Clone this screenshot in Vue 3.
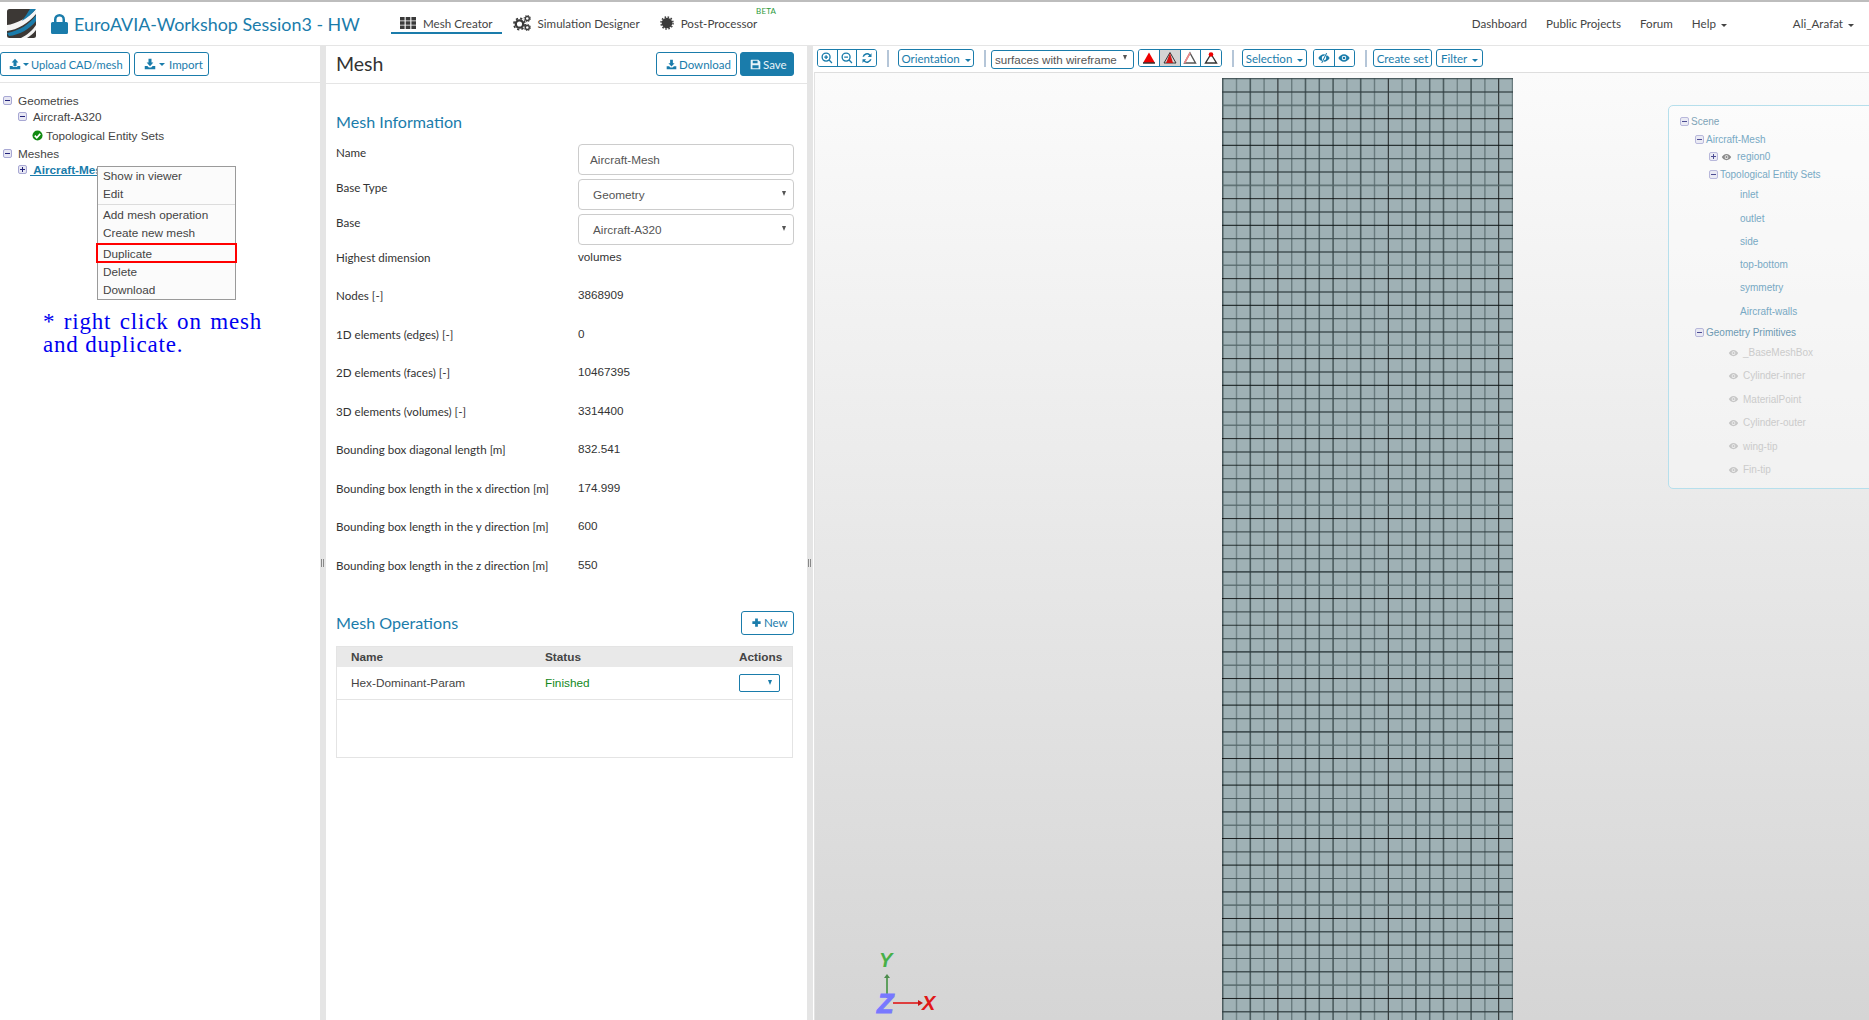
<script setup>
const nodeRows = [
  ['Highest dimension', 'volumes'],
  ['Nodes [-]', '3868909'],
  ['1D elements (edges) [-]', '0'],
  ['2D elements (faces) [-]', '10467395'],
  ['3D elements (volumes) [-]', '3314400'],
  ['Bounding box diagonal length [m]', '832.541'],
  ['Bounding box length in the x direction [m]', '174.999'],
  ['Bounding box length in the y direction [m]', '600'],
  ['Bounding box length in the z direction [m]', '550'],
]
const vStyle = [
  ['#39494c', 1.6], ['#647679', 1.4], ['#39494c', 1.6], ['#5d6f72', 1.4],
  ['#000000', 1], ['#5d6f72', 1.4], ['#39494c', 1.6], ['#44565a', 1.5],
]
const hStyle = [
  ['#39494c', 1.2], ['#2f3d40', 1.6], ['#546669', 1.6], ['#000000', 1], ['#2f3d40', 1.4], ['#101818', 1.2],
]
const vLines = Array.from({ length: 22 }, (_, i) => ({ p: 0.7 + i * 13.8, c: vStyle[i % 8][0], w: vStyle[i % 8][1] }))
const hLines = Array.from({ length: 72 }, (_, i) => ({ p: 0.7 + i * 13.33, c: hStyle[i % 6][0], w: hStyle[i % 6][1] }))
const geo = ['_BaseMeshBox', 'Cylinder-inner', 'MaterialPoint', 'Cylinder-outer', 'wing-tip', 'Fin-tip']
const sets = ['inlet', 'outlet', 'side', 'top-bottom', 'symmetry', 'Aircraft-walls']
</script>

<template>
  <div class="app">
    <svg class="defs" width="0" height="0" aria-hidden="true">
      <symbol id="i-up" viewBox="0 0 16 16"><path d="M8 1 12.500 6H10v5H6V6H3.500z" /><path d="M1 10.500h4v1.500h6v-1.500h4V15H1z" /></symbol>
      <symbol id="i-down" viewBox="0 0 16 16"><path d="M6 1h4v5h2.500L8 11 3.500 6H6z" /><path d="M1 10.500h3.500L6.500 12.500h3l2-2H15V15H1z" /></symbol>
      <symbol id="i-save" viewBox="0 0 16 16"><path fill-rule="evenodd" d="M2 1h10l3 3v11H1V2a1 1 0 0 1 1-1zm2 1.500V6h7V2.500zM3.500 9v4.500h9V9z" /></symbol>
      <symbol id="i-plus" viewBox="0 0 16 16"><path d="M6 2h4v4h4v4h-4v4H6v-4H2V6h4z" /></symbol>
      <symbol id="i-zin" viewBox="0 0 16 16"><path fill="none" stroke="currentColor" stroke-width="1.800" d="M6.800 1.500a5.300 5.300 0 1 1 0 10.600 5.300 5.300 0 0 1 0-10.600zM10.800 10.800l3.800 3.800M4.300 6.800h5M6.800 4.300v5" /></symbol>
      <symbol id="i-zout" viewBox="0 0 16 16"><path fill="none" stroke="currentColor" stroke-width="1.800" d="M6.800 1.500a5.300 5.300 0 1 1 0 10.600 5.300 5.300 0 0 1 0-10.600zM10.800 10.800l3.800 3.800M4.300 6.800h5" /></symbol>
      <symbol id="i-ref" viewBox="0 0 16 16"><path d="M14 1.500v5h-5l1.900-1.900A4.200 4.200 0 0 0 4 6.300H2A6.200 6.200 0 0 1 12.300 3.200zM2 14.500v-5h5l-1.900 1.900A4.200 4.200 0 0 0 12 9.700h2A6.200 6.200 0 0 1 3.700 12.800z" /></symbol>
      <symbol id="i-eye" viewBox="0 0 16 16"><path fill-rule="evenodd" d="M8 3c3.400 0 6 2.500 7.500 5-1.500 2.500-4.100 5-7.500 5S2 10.500.5 8C2 5.500 4.600 3 8 3zm0 2a3 3 0 1 0 0 6 3 3 0 0 0 0-6z" /><circle cx="8" cy="8" r="1.800" /></symbol>
      <symbol id="i-eyex" viewBox="0 0 16 16"><path fill-rule="evenodd" d="M8 3c3.400 0 6 2.500 7.500 5-1.500 2.500-4.100 5-7.500 5S2 10.500.5 8C2 5.500 4.600 3 8 3zm0 2a3 3 0 1 0 0 6 3 3 0 0 0 0-6z" /><path d="M11.500 1.500 5 14.500" stroke="#fff" stroke-width="2.800" /><path d="M11.500 1.500 5 14.500" stroke="currentColor" stroke-width="1.400" /></symbol>
      <symbol id="i-th" viewBox="0 0 16 14"><path d="M0 1h4.600v3.400H0zM5.700 1h4.600v3.400H5.700zM11.400 1H16v3.400h-4.600zM0 5.300h4.600v3.400H0zM5.700 5.300h4.600v3.400H5.700zM11.400 5.300H16v3.400h-4.600zM0 9.600h4.600V13H0zM5.700 9.600h4.600V13H5.700zM11.400 9.600H16V13h-4.600z" /></symbol>
      <symbol id="i-cogs" viewBox="0 0 18 16">
        <circle cx="6.500" cy="9" r="3.700" fill="none" stroke="currentColor" stroke-width="2.300" />
        <circle cx="6.500" cy="9" r="5.600" fill="none" stroke="currentColor" stroke-width="1.700" stroke-dasharray="2.200 2.200" />
        <circle cx="14.300" cy="3.500" r="2" fill="none" stroke="currentColor" stroke-width="1.400" />
        <circle cx="14.300" cy="3.500" r="3.200" fill="none" stroke="currentColor" stroke-width="1" stroke-dasharray="1.300 1.200" />
        <circle cx="14.300" cy="12.500" r="2" fill="none" stroke="currentColor" stroke-width="1.400" />
        <circle cx="14.300" cy="12.500" r="3.200" fill="none" stroke="currentColor" stroke-width="1" stroke-dasharray="1.300 1.200" />
      </symbol>
      <symbol id="i-sun" viewBox="0 0 16 16">
        <circle cx="8" cy="8" r="6.100" />
        <circle cx="8" cy="8" r="6.900" fill="none" stroke="currentColor" stroke-width="1.600" stroke-dasharray="1.800 1.800" />
      </symbol>
    </svg>

    <header class="topbar">
      <svg class="logo" viewBox="0 0 29 29">
        <rect width="29" height="29" rx="2.500" fill="#3c3835" />
        <path d="M0 16C9 15 21 9 29 0v5C22 14 10 21 0 22z" fill="#f4f4f4" />
        <path d="M0 24C12 22 23 15 29 6v6C23 20 12 26 2 27z" fill="#1a7cab" />
        <path d="M14 29C20 26 26 21 29 16v5c-3 4-6 6-9 8z" fill="#f4f4f4" />
        <path d="M15 12C20 9 25 5 29 0h-6c-2 3-5 8-8 12z" fill="#1a7cab" />
      </svg>
      <svg class="lock" viewBox="0 0 17 20">
        <path fill-rule="evenodd" d="M3 8V5.500a5.500 5.500 0 0 1 11 0V8h1.500A1.500 1.500 0 0 1 17 9.500v9a1.500 1.500 0 0 1-1.500 1.500h-14A1.500 1.500 0 0 1 0 18.500v-9A1.500 1.500 0 0 1 1.500 8zm2.500 0h6V5.500a3 3 0 0 0-6 0z" />
      </svg>
      <h1 class="title">EuroAVIA-Workshop Session3 - HW</h1>
      <nav class="tabs">
        <a class="tab active"><svg class="ti th"><use href="#i-th" /></svg>Mesh Creator</a>
        <a class="tab"><svg class="ti cog"><use href="#i-cogs" /></svg>Simulation Designer</a>
        <a class="tab"><svg class="ti sun"><use href="#i-sun" /></svg>Post-Processor<span class="beta">BETA</span></a>
      </nav>
      <nav class="rnav">
        <a>Dashboard</a>
        <a>Public Projects</a>
        <a>Forum</a>
        <a>Help <i class="caret" /></a>
        <a class="user">Ali_Arafat <i class="caret" /></a>
      </nav>
    </header>

    <div class="main">
      <aside class="left">
        <div class="left-tools">
          <button class="btn"><svg class="bi"><use href="#i-up" /></svg><i class="caret" /> Upload CAD/mesh</button>
          <button class="btn"><svg class="bi"><use href="#i-down" /></svg><i class="caret" /> Import</button>
        </div>
        <div class="tree">
          <div class="t-row t0"><span class="tg" />Geometries</div>
          <div class="t-row t1"><span class="tg" />Aircraft-A320</div>
          <div class="t-row t2">
            <svg class="check" viewBox="0 0 12 12"><circle cx="6" cy="6" r="5.500" fill="#118a11" /><path d="M3 6.200 5.200 8.400 9 4.200" fill="none" stroke="#fff" stroke-width="1.800" /></svg>
            Topological Entity Sets
          </div>
          <div class="t-row t3"><span class="tg" />Meshes</div>
          <div class="t-row t4"><span class="tg plus" /><a class="sel">&nbsp;Aircraft-Mesh</a></div>
          <ul class="ctx">
            <li>Show in viewer</li>
            <li>Edit</li>
            <li class="sep" />
            <li>Add mesh operation</li>
            <li>Create new mesh</li>
            <li class="dup">Duplicate</li>
            <li>Delete</li>
            <li>Download</li>
          </ul>
        </div>
        <p class="note">* right click on mesh and duplicate.</p>
      </aside>

      <div class="gutter" />

      <section class="mid">
        <div class="mid-head">
          <h2 class="mesh-h">Mesh</h2>
          <button class="btn"><svg class="bi"><use href="#i-down" /></svg>Download</button>
          <button class="btn solid"><svg class="bi"><use href="#i-save" /></svg>Save</button>
        </div>
        <div class="mid-body">
          <h3 class="sec info">Mesh Information</h3>
          <div class="frow"><label>Name</label><div class="ctl">Aircraft-Mesh</div></div>
          <div class="frow"><label>Base Type</label><div class="ctl sel-ctl">Geometry<i class="tri" /></div></div>
          <div class="frow"><label>Base</label><div class="ctl sel-ctl">Aircraft-A320<i class="tri" /></div></div>
          <div v-for="r in nodeRows" :key="r[0]" class="frow txt"><label>{{ r[0] }}</label><span>{{ r[1] }}</span></div>

          <div class="ops-head">
            <h3 class="sec">Mesh Operations</h3>
            <button class="btn"><svg class="bi"><use href="#i-plus" /></svg>New</button>
          </div>
          <div class="table">
            <div class="th-row"><span class="c1">Name</span><span class="c2">Status</span><span class="c3">Actions</span></div>
            <div class="td-row">
              <span class="c1">Hex-Dominant-Param</span>
              <span class="c2 ok">Finished</span>
              <span class="c3"><button class="act"><i class="tri blue" /></button></span>
            </div>
          </div>
        </div>
      </section>

      <div class="gutter" />

      <section class="right">
        <div class="toolbar">
          <div class="grp g1">
            <button><svg class="tbi"><use href="#i-zin" /></svg></button>
            <button><svg class="tbi"><use href="#i-zout" /></svg></button>
            <button><svg class="tbi"><use href="#i-ref" /></svg></button>
          </div>
          <i class="bar" />
          <button class="tb orient">Orientation <i class="caret" /></button>
          <i class="bar" />
          <div class="tb-select">surfaces with wireframe<i class="tri" /></div>
          <div class="grp g2">
            <button>
              <svg class="tri-i" viewBox="0 0 14 14"><path d="M7 1.500 13 12H1z" fill="#e00" /><path d="M1 12h12" stroke="#333" stroke-width="1.300" /></svg>
            </button>
            <button class="on">
              <svg class="tri-i" viewBox="0 0 14 14"><path d="M7 1.500 13 12H1z" fill="#d9d9d9" stroke="#333" /><path d="M7 2 10 12H3z" fill="#d01515" /></svg>
            </button>
            <button>
              <svg class="tri-i" viewBox="0 0 14 14"><path d="M7 2 12.500 12h-11z" fill="#fff" stroke="#555" stroke-width="1.400" /><path d="M7 2 1.500 12" stroke="#f08a8a" stroke-width="1.600" /></svg>
            </button>
            <button>
              <svg class="tri-i" viewBox="0 0 14 14"><path d="M7 3 12.500 12h-11z" fill="#fff" stroke="#333" stroke-width="1.400" /><circle cx="7" cy="3.500" r="2.300" fill="#e00" /></svg>
            </button>
          </div>
          <i class="bar" />
          <button class="tb sel-b">Selection <i class="caret" /></button>
          <div class="grp g3">
            <button><svg class="tbi eye"><use href="#i-eyex" /></svg></button>
            <button><svg class="tbi eye"><use href="#i-eye" /></svg></button>
          </div>
          <i class="bar" />
          <button class="tb create">Create set</button>
          <button class="tb filter">Filter <i class="caret" /></button>
        </div>

        <div class="viewer">
          <svg class="mesh" width="291" height="950">
            <line v-for="(l, i) in vLines" :key="'v' + i" :x1="l.p" :x2="l.p" y1="0" y2="950" :stroke="l.c" :stroke-width="l.w" stroke-opacity=".82" />
            <line v-for="(l, i) in hLines" :key="'h' + i" x1="0" x2="291" :y1="l.p" :y2="l.p" :stroke="l.c" :stroke-width="l.w" stroke-opacity=".82" />
          </svg>

          <div class="scene">
            <div class="s-row s-a"><span class="tg" />Scene</div>
            <div class="s-row s-b"><span class="tg" />Aircraft-Mesh</div>
            <div class="s-row s-c"><span class="tg plus" /><svg class="s-eye dark"><use href="#i-eye" /></svg><span>region0</span></div>
            <div class="s-row s-d"><span class="tg" />Topological Entity Sets</div>
            <div v-for="s in sets" :key="s" class="s-row s-leaf">{{ s }}</div>
            <div class="s-row s-g"><span class="tg" />Geometry Primitives</div>
            <div v-for="g in geo" :key="g" class="s-row s-off"><svg class="s-eye"><use href="#i-eye" /></svg>{{ g }}</div>
          </div>

          <svg class="triad" width="80" height="72" viewBox="0 0 80 72">
            <text x="17" y="17" class="ax" fill="#47b047">Y</text>
            <path d="M25 48V27" stroke="#5f9f5f" stroke-width="2" />
            <path d="M25 24l3 4h-6z" fill="#4e8c4e" />
            <path d="M31 53h25" stroke="#e01818" stroke-width="1.600" />
            <path d="M61 53l-5-3v6z" fill="#c81414" />
            <text x="15" y="63" class="az" fill="#7878ff" stroke="#7878ff" stroke-width="1">Z</text>
            <text x="60" y="60" class="ax" fill="#e01818">X</text>
          </svg>
        </div>
      </section>
    </div>
  </div>
</template>

<style>
html, body { margin: 0; overflow: hidden; background: #fff; }
</style>

<style scoped>
.app { width: 1869px; height: 1020px; overflow: hidden; display: flex; flex-direction: column; font-family: Lato, "Liberation Sans", sans-serif; font-size: 11.600px; color: #444; background: #fff; }
.defs { position: absolute; }
a { cursor: pointer; }
svg { fill: currentColor; flex: none; }

.topbar { height: 43px; flex: none; display: flex; align-items: center; border-top: 2px solid #bdbdbd; border-bottom: 1px solid #e5e5e5; padding-left: 7px; box-sizing: content-box; }
.logo { width: 29px; height: 29px; }
.lock { width: 17px; height: 20px; margin-left: 15px; color: #1a7cab; }
.title { margin: 0 0 0 6px; width: 317px; font-size: 17.900px; font-weight: 400; color: #1a7cab; white-space: nowrap; }
.tabs { display: flex; align-self: flex-start; }
.tab { display: flex; align-items: center; height: 18px; padding: 12px 9px 0; border-bottom: 2px solid transparent; color: #444; white-space: nowrap; position: relative; margin-right: 2px; box-sizing: content-box; }
.tab.active { border-bottom-color: #1a7cab; }
.ti { color: #3a3a3a; margin-right: 7px; }
.ti.th { width: 16px; height: 14px; }
.ti.cog { width: 18px; height: 16px; }
.ti.sun { width: 14px; height: 14px; }
.beta { position: absolute; right: -10px; top: 4px; font-size: 8px; color: #2f9a3c; letter-spacing: .2px; }
.rnav { margin-left: auto; display: flex; align-items: center; color: #444; height: 100%; padding-right: 15px; }
.rnav a { margin-left: 19px; white-space: nowrap; }
.rnav .user { margin-left: 66px; }
.caret { display: inline-block; width: 0; height: 0; border-left: 3.500px solid transparent; border-right: 3.500px solid transparent; border-top: 3.500px solid currentColor; vertical-align: 1px; margin-left: 2px; }

.main { flex: 1; display: flex; min-height: 0; }
.left { width: 320px; flex: none; position: relative; }
.left-tools { height: 37px; padding-top: 6px; box-sizing: border-box; display: flex; gap: 4px; border-bottom: 1px solid #e5e5e5; }
.btn { height: 24px; padding: 0 9px; background: #fff; border: 1px solid #1a7cab; border-radius: 3px; color: #1a7cab; font: 11.500px Lato, sans-serif; white-space: nowrap; display: inline-flex; align-items: center; box-sizing: border-box; }
.btn.solid { background: #1a7cab; color: #e8f3f8; }
.bi { width: 11px; height: 11px; margin-right: 2px; }
.left-tools .btn:first-child { width: 130px; padding: 0 0 0 8px; font-size: 11.100px; }
.left-tools .btn:last-child { width: 75px; padding: 0 0 0 9px; }
.left-tools .bi { width: 12px; height: 12px; margin-right: 2px; }
.left-tools .caret { margin: 0 2px 0 0; }
.left-tools .btn:last-child .caret { margin: 0 4px 0 1px; }

.tree { position: relative; font: 11.750px "Liberation Sans", sans-serif; color: #444; padding-top: 9px; }
.t-row { display: flex; align-items: center; height: 18px; white-space: nowrap; }
.t0 { padding-left: 3px; height: 16px; }
.t1 { padding-left: 18px; height: 16px; }
.t2 { padding-left: 32px; height: 21px; margin: 1px 0 -1px; }
.t3 { padding-left: 3px; height: 16px; }
.t4 { padding-left: 18px; height: 16px; }
.tg { width: 9px; height: 9px; border: 1px solid #a8a8d4; background: #e7e7f3; border-radius: 2px; box-sizing: border-box; position: relative; margin-right: 6px; flex: none; }
.tg::before { content: ""; position: absolute; left: 1px; right: 1px; top: 3px; height: 1px; background: #22227a; }
.tg.plus::after { content: ""; position: absolute; top: 1px; bottom: 1px; left: 3px; width: 1px; background: #22227a; }
.check { width: 11px; height: 11px; margin-right: 3px; }
.sel { color: #1a7cab; font-weight: 700; text-decoration: underline; margin-left: -3px; }
.ctx { position: absolute; left: 97px; top: 83px; width: 139px; box-sizing: border-box; margin: 0; padding: 0; list-style: none; background: #fbfbfb; border: 1px solid #9a9a9a; font-size: 11.750px; z-index: 3; }
.ctx li { height: 18px; line-height: 18px; padding-left: 5px; }
.ctx .sep { height: 1px; padding: 0; background: #dcdcdc; margin: 1px 0 1px; }
.ctx .dup { position: relative; height: 20px; line-height: 17px; margin: 1px -2px 0; padding-left: 5px; border: 2px solid #f00; box-sizing: border-box; background: #fbfbfb; }
.note { position: absolute; left: 43px; top: 264px; width: 219px; margin: 0; font: 23px/23px "Liberation Serif", serif; letter-spacing: .8px; color: #0000f0; text-align: justify; }

.gutter { width: 6px; flex: none; background: #e5e5e5; position: relative; }
.gutter::after { content: ""; position: absolute; top: 513px; left: 1px; width: 1px; height: 8px; border-left: 1px solid #888; border-right: 1px solid #888; }

.mid { width: 481px; flex: none; box-sizing: border-box; }
.mid-head { height: 37px; display: flex; align-items: center; border-bottom: 1px solid #e5e5e5; padding: 0 13px 0 10px; gap: 3px; }
.mesh-h { margin: -2px auto 0 0; font-size: 19.500px; font-weight: 400; color: #333; }
.mid-head .btn { margin-top: -1px; }
.mid-head .btn:nth-of-type(1) { width: 81px; padding: 0 9px; }
.mid-head .btn:nth-of-type(2) { width: 54px; padding: 0 9px; }
.mid-body { padding: 0 12px 0 10px; }
.sec { margin: 0; font-size: 16.100px; font-weight: 400; color: #1a7cab; }
.info { height: 60px; line-height: 20px; padding-top: 28px; box-sizing: border-box; }
.frow { display: grid; grid-template-columns: 242px 216px; height: 35px; }
.frow label { line-height: 18px; color: #333; white-space: nowrap; }
.frow.txt { height: 38.450px; }
.frow.txt span { font: 11.700px/16px "Liberation Sans", sans-serif; color: #333; }
.ctl { height: 31px; box-sizing: border-box; border: 1px solid #ccc; border-radius: 4px; font: 11.750px/29px "Liberation Sans", sans-serif; color: #555; padding-left: 11px; position: relative; }
.sel-ctl { padding-left: 14px; }
.tri { display: inline-block; width: 0; height: 0; border-left: 2.500px solid transparent; border-right: 2.500px solid transparent; border-top: 5px solid #555; }
.sel-ctl .tri { position: absolute; right: 7px; top: 11px; }
.ops-head { display: flex; align-items: center; justify-content: space-between; height: 24px; margin-top: 16px; margin-bottom: 11.500px; }
.ops-head .btn { width: 53px; padding: 0 9px; height: 24px; margin-right: 1px; }
.table { width: 457px; height: 112px; border: 1px solid #e4e4e4; box-sizing: border-box; font: 11.800px "Liberation Sans", sans-serif; }
.th-row, .td-row { display: grid; grid-template-columns: 194px 194px 1fr; padding-left: 14px; align-items: center; }
.th-row { height: 20px; background: #e9e9e9; font-weight: 700; color: #444; }
.td-row { height: 32px; border-bottom: 1px solid #e4e4e4; box-sizing: content-box; }
.ok { color: #12891c; }
.act { width: 41px; height: 18px; background: #fff; border: 1px solid #1a7cab; border-radius: 2px; position: relative; padding: 0; display: block; }
.tri.blue { border-top-color: #1a7cab; position: absolute; right: 7px; top: 5px; }

.right { flex: 1; min-width: 0; display: flex; flex-direction: column; padding-left: 1px; }
.toolbar { height: 26px; flex: none; display: flex; align-items: flex-start; padding: 3px 0 0 3px; box-sizing: border-box; font: 11.500px/16px Lato, sans-serif; }
.toolbar button { font: inherit; background: #fff; color: #1a7cab; }
.grp { display: flex; height: 18px; border: 1px solid #1a7cab; border-radius: 3px; box-sizing: border-box; overflow: hidden; flex: none; }
.grp button { flex: 1; border: 0; border-right: 1px solid #1a7cab; padding: 0; display: flex; align-items: center; justify-content: center; }
.grp button:last-child { border-right: 0; }
.grp button.on { background: #d4d4d4; }
.g1 { width: 60px; }
.g2 { width: 84px; margin-left: 4px; }
.g3 { width: 42px; margin-left: 6px; }
.tbi { width: 12px; height: 12px; color: #1a7cab; }
.tbi.eye { width: 14px; height: 12px; }
.tri-i { width: 14px; height: 14px; }
.bar { width: 2px; height: 17px; background: #b5c6d8; margin: 1px 9px 0 10px; flex: none; }
.tb { height: 18px; box-sizing: border-box; border: 1px solid #1a7cab; border-radius: 3px; padding: 1px 0 0; white-space: nowrap; flex: none; }
.orient { width: 76px; }
.bar + .tb-select { margin-left: -4px; }
.tb-select { width: 143px; height: 19px; box-sizing: border-box; border: 1px solid #1a7cab; border-radius: 3px; margin-top: 1px; font: 11.600px/17px "Liberation Sans", sans-serif; color: #555; padding-left: 3px; position: relative; white-space: nowrap; flex: none; }
.tb-select .tri { position: absolute; right: 6px; top: 4px; }
.sel-b { width: 65px; margin-left: -1px; }
.create { width: 59px; margin-left: -3px; }
.filter { width: 47px; margin-left: 4px; }

.viewer { flex: 1; position: relative; overflow: hidden; border-top: 1px solid #dedede; border-left: 1px solid #e2e2e2; background: linear-gradient(#fbfbfb, #d5d5d5); }
.mesh { position: absolute; left: 407px; top: 5px; background: #9fb1b5; }
.scene { position: absolute; left: 853px; top: 32px; width: 260px; height: 384px; box-sizing: border-box; border: 1px solid #b6dfec; border-radius: 5px; background: rgba(255, 255, 255, .35); padding-top: 6.600px; font: 10px "Liberation Sans", sans-serif; color: #78a9c4; }
.s-row { display: flex; align-items: center; white-space: nowrap; }
.scene .tg { margin-right: 2px; opacity: .8; }
.s-a { height: 18px; padding-left: 11px; color: #7fa4b8; }
.s-b { height: 17px; padding-left: 26px; }
.s-c { height: 18.500px; padding-left: 40px; }
.s-d { height: 17px; padding-left: 40px; }
.s-leaf { height: 23.300px; padding-left: 71px; }
.s-g { height: 19px; padding-left: 26px; color: #6e9ab3; }
.s-off { height: 23.400px; padding-left: 58px; color: #cbcbcb; }
.s-off:nth-child(12) { margin-top: -1px; }
.s-eye { width: 13px; height: 10px; margin-right: 3px; color: #c6c6c6; }
.s-eye.dark { color: #8a8a8a; margin-left: 0; margin-right: 4px; }
.triad { position: absolute; left: 47px; top: 877px; }
.ax { font: italic 700 20px "Liberation Sans", sans-serif; }
.az { font: italic 700 27px "Liberation Sans", sans-serif; }
</style>
